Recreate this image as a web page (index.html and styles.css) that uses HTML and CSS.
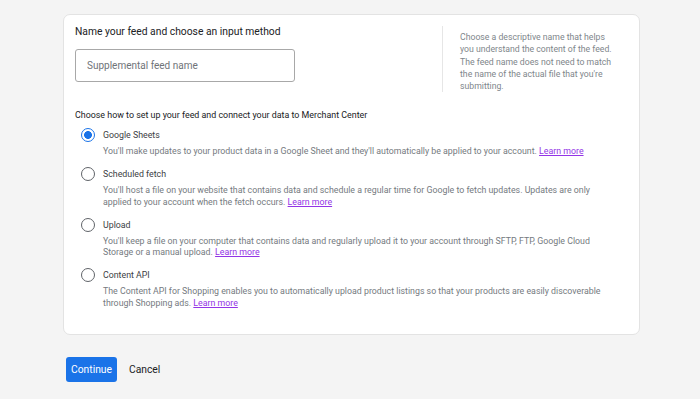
FILE: index.html
```html
<!DOCTYPE html>
<html lang="en">
<head>
  <meta charset="UTF-8" />
  <meta name="viewport" content="width=device-width, initial-scale=1.0"/>
  <title>Create supplemental feed</title>
  <link rel="stylesheet" href="styles.css">
</head>
<body>
  <div class="card">
    <div class="name-section">
      <div class="name-main">
        <h2>Name your feed and choose an input method</h2>
        <input class="feed-input" type="text" placeholder="Supplemental feed name">
      </div>
      <p class="help">Choose a descriptive name that helps you understand the content of the feed. The feed name does not need to match the name of the actual file that you're submitting.</p>
    </div>

    <p class="method-title">Choose how to set up your feed and connect your data to Merchant Center</p>

    <div class="options">
      <div class="option">
        <span class="radio checked"></span>
        <div>
          <div class="opt-label">Google Sheets</div>
          <div class="opt-desc">You'll make updates to your product data in a Google Sheet and they'll automatically be applied to your account. <a href="#">Learn more</a></div>
        </div>
      </div>
      <div class="option">
        <span class="radio"></span>
        <div>
          <div class="opt-label">Scheduled fetch</div>
          <div class="opt-desc">You'll host a file on your website that contains data and schedule a regular time for Google to fetch updates. Updates are only applied to your account when the fetch occurs. <a href="#">Learn more</a></div>
        </div>
      </div>
      <div class="option">
        <span class="radio"></span>
        <div>
          <div class="opt-label">Upload</div>
          <div class="opt-desc">You'll keep a file on your computer that contains data and regularly upload it to your account through SFTP, FTP, Google Cloud Storage or a manual upload. <a href="#">Learn more</a></div>
        </div>
      </div>
      <div class="option">
        <span class="radio"></span>
        <div>
          <div class="opt-label">Content API</div>
          <div class="opt-desc">The Content API for Shopping enables you to automatically upload product listings so that your products are easily discoverable through Shopping ads. <a href="#">Learn more</a></div>
        </div>
      </div>
    </div>
  </div>

  <div class="actions">
    <button class="btn">Continue</button>
    <button class="btn-text">Cancel</button>
  </div>
</body>
</html>
```

FILE: styles.css
```css
body { font-family: Roboto, "Liberation Sans", sans-serif; margin: 0; padding: 14px 60px 0 63px; background: #f4f4f4; color: #202124; }
.card { background: #fff; border: 1px solid #e3e3e3; border-radius: 7px; padding: 9px 11px 16px 11px; }
.name-section { display: flex; }
.name-main { width: 367px; }
h2 { margin: 0; font-size: 10.3px; font-weight: 400; line-height: 16px; color: #202124; }
.feed-input { display: block; box-sizing: border-box; width: 220px; height: 33px; margin-top: 9px; padding: 0 11px; border: 1px solid #a8a8a8; border-radius: 3px; font-family: inherit; font-size: 10px; color: #202124; }
.feed-input::placeholder { color: #6f7378; }
.help { margin: 2px 0 0 0; padding: 5px 0 0 17px; border-left: 1px solid #e6e6e6; width: 158px; height: 61px; font-size: 8.7px; line-height: 12.3px; color: #80868b; }
.method-title { margin: 16px 0 0 0; font-size: 8.9px; line-height: 14px; color: #202124; }
.options { margin-top: 5px; }
.option { display: flex; align-items: flex-start; gap: 8px; margin-left: 6px; margin-bottom: 8.5px; }
.radio { flex: none; box-sizing: border-box; width: 14px; height: 14px; border: 1.5px solid #5f6368; border-radius: 50%; margin-top: 1px; }
.radio.checked { border-color: #1a73e8; background: radial-gradient(circle, #1a73e8 0 3.6px, transparent 4.2px); }
.opt-label { font-size: 8.8px; line-height: 16px; color: #3c4043; }
.opt-desc { max-width: 515px; margin-top: 3px; font-size: 8.8px; line-height: 11.6px; color: #757a80; }
.opt-desc a { color: #9334e6; }
.actions { display: flex; align-items: center; gap: 4px; margin-top: 22px; margin-left: 3px; }
.btn { background: #1a73e8; color: #fff; border: none; border-radius: 3px; height: 25px; padding: 0 5px; font-family: inherit; font-size: 10.3px; cursor: pointer; }
.btn-text { background: none; border: none; color: #202124; font-family: inherit; font-size: 10.3px; padding: 0 8px; cursor: pointer; }
```
